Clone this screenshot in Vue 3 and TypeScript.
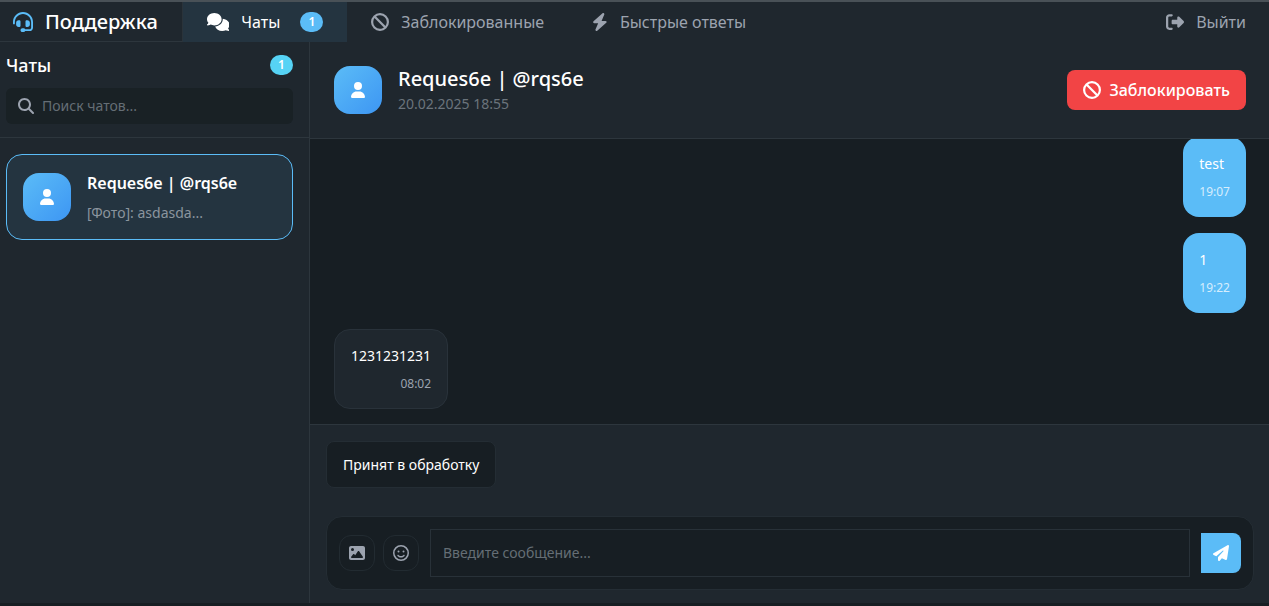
<script setup lang="ts">
import { ref } from 'vue'

interface Icon { box: string; path: string }
interface Message { id: number; text: string; time: string; own: boolean }

const icons: Record<string, Icon> = {
  headset: { box: '0 0 512 512', path: 'M256 48C141.1 48 48 141.1 48 256v40c0 13.3-10.7 24-24 24s-24-10.7-24-24V256C0 114.6 114.6 0 256 0S512 114.6 512 256V400.1c0 48.6-39.4 88-88.1 88L313.6 488c-8.3 14.3-23.8 24-41.6 24H240c-26.5 0-48-21.5-48-48s21.5-48 48-48h32c17.8 0 33.3 9.7 41.6 24l110.4 .1c22.1 0 40-17.9 40-40V256c0-114.9-93.1-208-208-208zM144 208h16c17.7 0 32 14.3 32 32V352c0 17.7-14.3 32-32 32H144c-35.3 0-64-28.7-64-64V272c0-35.3 28.7-64 64-64zm224 0c35.3 0 64 28.7 64 64v48c0 35.3-28.7 64-64 64H352c-17.7 0-32-14.3-32-32V240c0-17.7 14.3-32 32-32h16z' },
  comments: { box: '0 0 640 512', path: 'M208 352c114.9 0 208-78.8 208-176S322.9 0 208 0S0 78.8 0 176c0 38.6 14.7 74.3 39.6 103.4c-3.5 9.4-8.7 17.7-14.2 24.7c-4.8 6.2-9.7 11-13.3 14.3c-1.8 1.6-3.3 2.9-4.3 3.7c-.5 .4-.9 .7-1.1 .8l-.2 .2C1 327.2-1.4 334.4 .8 340.9S9.1 352 16 352c21.8 0 43.8-5.6 62.1-12.5c9.2-3.5 17.8-7.4 25.2-11.4C134.1 343.3 169.8 352 208 352zM448 176c0 112.3-99.1 196.9-216.5 207C255.8 457.4 336.4 512 432 512c38.2 0 73.9-8.7 104.7-23.9c7.5 4 16 7.9 25.2 11.4c18.3 6.9 40.3 12.5 62.1 12.5c6.9 0 13.1-4.5 15.2-11.1c2.1-6.6-.2-13.8-5.8-17.9l-.2-.2c-.2-.2-.6-.4-1.1-.8c-1-.8-2.5-2-4.3-3.7c-3.6-3.3-8.5-8.1-13.3-14.3c-5.5-7-10.7-15.4-14.2-24.7c24.9-29 39.6-64.7 39.6-103.4c0-92.8-84.9-168.9-192.6-175.5c.4 5.1 .6 10.3 .6 15.5z' },
  ban: { box: '0 0 512 512', path: 'M367.2 412.5L99.5 144.8C77.1 176.1 64 214.5 64 256c0 106 86 192 192 192c41.5 0 79.9-13.1 111.2-35.5zm45.3-45.3C434.9 335.9 448 297.5 448 256c0-106-86-192-192-192c-41.5 0-79.9 13.1-111.2 35.5L412.5 367.2zM0 256a256 256 0 1 1 512 0A256 256 0 1 1 0 256z' },
  bolt: { box: '0 0 448 512', path: 'M349.4 44.6c5.9-13.7 1.5-29.7-10.6-38.5s-28.6-8-39.9 1.8l-256 224c-10 8.8-13.6 22.9-8.9 35.3S50.7 288 64 288H175.5L98.6 467.4c-5.9 13.7-1.5 29.7 10.6 38.5s28.6 8 39.9-1.8l256-224c10-8.8 13.6-22.9 8.9-35.3s-16.6-20.7-30-20.7H272.5L349.4 44.6z' },
  exit: { box: '0 0 512 512', path: 'M377.9 105.9L500.7 228.7c7.2 7.2 11.3 17.1 11.3 27.3s-4.1 20.1-11.3 27.3L377.9 406.1c-6.4 6.4-15 9.9-24 9.9c-18.7 0-33.9-15.2-33.9-33.9l0-62.1-128 0c-17.7 0-32-14.3-32-32l0-64c0-17.7 14.3-32 32-32l128 0 0-62.1c0-18.7 15.2-33.9 33.9-33.9c9 0 17.6 3.6 24 9.9zM160 96L96 96c-17.7 0-32 14.3-32 32l0 256c0 17.7 14.3 32 32 32l64 0c17.7 0 32 14.3 32 32s-14.3 32-32 32l-64 0c-53 0-96-43-96-96L0 128C0 75 43 32 96 32l64 0c17.7 0 32 14.3 32 32s-14.3 32-32 32z' },
  search: { box: '0 0 512 512', path: 'M416 208c0 45.9-14.9 88.3-40 122.7L502.6 457.4c12.5 12.5 12.5 32.8 0 45.3s-32.8 12.5-45.3 0L330.7 376c-34.4 25.2-76.8 40-122.7 40C93.1 416 0 322.9 0 208S93.1 0 208 0S416 93.1 416 208zM208 352a144 144 0 1 0 0-288 144 144 0 1 0 0 288z' },
  user: { box: '0 0 448 512', path: 'M224 256A128 128 0 1 0 224 0a128 128 0 1 0 0 256zm-45.7 48C79.8 304 0 383.8 0 482.3C0 498.7 13.3 512 29.7 512H418.3c16.4 0 29.7-13.3 29.7-29.7C448 383.8 368.2 304 269.7 304H178.3z' },
  image: { box: '0 0 512 512', path: 'M0 96C0 60.7 28.7 32 64 32H448c35.3 0 64 28.7 64 64V416c0 35.3-28.7 64-64 64H64c-35.3 0-64-28.7-64-64V96zM323.8 202.5c-4.5-6.6-11.9-10.5-19.8-10.5s-15.4 3.9-19.8 10.5l-87 127.6L170.7 297c-4.6-5.7-11.5-9-18.7-9s-14.2 3.3-18.7 9l-64 80c-5.8 7.2-6.9 17.1-2.9 25.4s12.4 13.6 21.6 13.6h96 32H424c8.9 0 17.1-4.9 21.2-12.8s3.6-17.4-1.4-24.7l-120-176zM112 192a48 48 0 1 0 0-96 48 48 0 1 0 0 96z' },
  smile: { box: '0 0 512 512', path: 'M464 256A208 208 0 1 0 48 256a208 208 0 1 0 416 0zM0 256a256 256 0 1 1 512 0A256 256 0 1 1 0 256zm177.6 62.1C192.8 334.5 218.8 352 256 352s63.2-17.5 78.4-33.9c9-9.7 24.2-10.4 33.9-1.4s10.4 24.2 1.4 33.9c-22 23.8-60 49.4-113.6 49.4s-91.7-25.5-113.6-49.4c-9-9.7-8.4-24.9 1.4-33.9s24.9-8.4 33.9 1.4zM144.4 208a32 32 0 1 1 64 0 32 32 0 1 1 -64 0zm192-32a32 32 0 1 1 0 64 32 32 0 1 1 0-64z' },
  plane: { box: '0 0 512 512', path: 'M498.1 5.6c10.1 7 15.4 19.1 13.5 31.2l-64 416c-1.5 9.7-7.4 18.2-16 23s-18.9 5.4-28 1.6L284 427.7l-68.5 74.1c-8.9 9.7-22.9 12.9-35.2 8.1S160 493.2 160 480V396.4c0-4 1.5-7.8 4.2-10.7L331.8 202.8c5.8-6.3 5.6-16-.4-22s-15.7-6.4-22-.7L106 360.8 17.7 316.6C7.1 311.3 .3 300.7 0 288.9s5.9-22.8 16.1-28.7l448-256c10.7-6.1 23.9-5.5 34 1.4z' },
}

const messages = ref<Message[]>([
  { id: 1, text: 'test', time: '19:07', own: true },
  { id: 2, text: '1', time: '19:22', own: true },
  { id: 3, text: '1231231231', time: '08:02', own: false },
])
const search = ref('')
const draft = ref('')

function send() {
  const text = draft.value.trim()
  if (!text) return
  const time = new Date().toTimeString().slice(0, 5)
  messages.value.push({ id: messages.value.length + 1, text, time, own: true })
  draft.value = ''
}
</script>

<template>
  <div class="app">
    <nav class="nav">
      <div class="brand">
        <svg class="icon icon-brand" :viewBox="icons.headset.box" aria-hidden="true"><path :d="icons.headset.path" /></svg>
        <span>Поддержка</span>
      </div>
      <a class="tab active" href="#chats">
        <svg class="icon" :viewBox="icons.comments.box" aria-hidden="true"><path :d="icons.comments.path" /></svg>
        <span>Чаты</span>
        <span class="badge nav-badge">1</span>
      </a>
      <a class="tab" href="#blocked">
        <svg class="icon" :viewBox="icons.ban.box" aria-hidden="true"><path :d="icons.ban.path" /></svg>
        <span>Заблокированные</span>
      </a>
      <a class="tab" href="#replies">
        <svg class="icon" :viewBox="icons.bolt.box" aria-hidden="true"><path :d="icons.bolt.path" /></svg>
        <span>Быстрые ответы</span>
      </a>
      <a class="tab logout" href="#logout">
        <svg class="icon" :viewBox="icons.exit.box" aria-hidden="true"><path :d="icons.exit.path" /></svg>
        <span>Выйти</span>
      </a>
    </nav>

    <div class="body">
      <aside class="sidebar">
        <div class="side-head">
          <div class="side-title">
            <h2>Чаты</h2>
            <span class="badge count">1</span>
          </div>
          <label class="search">
            <svg class="icon icon-search" :viewBox="icons.search.box" aria-hidden="true"><path :d="icons.search.path" /></svg>
            <input v-model="search" type="text" placeholder="Поиск чатов..." aria-label="Поиск чатов" />
          </label>
        </div>
        <div class="chat-list">
          <button class="chat" type="button">
            <span class="avatar">
              <svg class="icon icon-user" :viewBox="icons.user.box" aria-hidden="true"><path :d="icons.user.path" /></svg>
            </span>
            <span class="chat-text">
              <span class="chat-name">Reques6e | @rqs6e</span>
              <span class="chat-preview">[Фото]: asdasda...</span>
            </span>
          </button>
        </div>
      </aside>

      <main class="main">
        <header class="chat-head">
          <span class="avatar">
            <svg class="icon icon-user" :viewBox="icons.user.box" aria-hidden="true"><path :d="icons.user.path" /></svg>
          </span>
          <div class="who">
            <h1>Reques6e | @rqs6e</h1>
            <time>20.02.2025 18:55</time>
          </div>
          <button class="block" type="button">
            <svg class="icon" :viewBox="icons.ban.box" aria-hidden="true"><path :d="icons.ban.path" /></svg>
            <span>Заблокировать</span>
          </button>
        </header>

        <section class="messages">
          <div v-for="m in messages" :key="m.id" class="bubble" :class="{ own: m.own }">
            <span class="text">{{ m.text }}</span>
            <time>{{ m.time }}</time>
          </div>
        </section>

        <footer class="foot">
          <button class="quick" type="button" @click="draft = 'Принят в обработку'">Принят в обработку</button>
          <form class="composer" @submit.prevent="send">
            <div class="tools">
              <button class="tool" type="button" aria-label="Прикрепить фото">
                <svg class="icon icon-tool" :viewBox="icons.image.box" aria-hidden="true"><path :d="icons.image.path" /></svg>
              </button>
              <button class="tool" type="button" aria-label="Эмодзи">
                <svg class="icon icon-tool" :viewBox="icons.smile.box" aria-hidden="true"><path :d="icons.smile.path" /></svg>
              </button>
            </div>
            <textarea v-model="draft" rows="1" placeholder="Введите сообщение..." aria-label="Сообщение"></textarea>
            <button class="send" type="submit" aria-label="Отправить">
              <svg class="icon icon-send" :viewBox="icons.plane.box" aria-hidden="true"><path :d="icons.plane.path" /></svg>
            </button>
          </form>
        </footer>
      </main>
    </div>
  </div>
</template>

<style>
body {
  background: #171e23;
}
</style>

<style scoped>
* {
  box-sizing: border-box;
}

.app {
  display: flex;
  flex-direction: column;
  height: 100vh;
  padding-bottom: 3px;
  border-top: 2px solid #495157;
  background: #171e23;
  color: #fff;
  font: 16px/24px "Noto Sans", "Open Sans", sans-serif;
}

button,
input,
textarea {
  margin: 0;
  font: inherit;
  color: inherit;
}

button {
  cursor: pointer;
}

h1,
h2 {
  margin: 0;
  font-weight: 500;
}

.icon {
  display: block;
  flex: none;
  width: auto;
  height: 18px;
  fill: currentColor;
}

.icon-brand {
  height: 20px;
  color: #5bbcf7;
}

.icon-search,
.icon-tool,
.icon-send {
  height: 16px;
}

.icon-user {
  height: 16px;
}

.nav {
  display: flex;
  flex: none;
  height: 40px;
  background: #1f272e;
}

.brand {
  display: flex;
  align-items: center;
  gap: 12px;
  padding: 0 24px 0 13px;
  border-right: 1px solid #2a333a;
  border-bottom: 1px solid #2d363d;
  font-size: 20px;
  font-weight: 500;
}

.tab {
  display: flex;
  align-items: center;
  gap: 12px;
  padding: 0 24px;
  color: #9ca3af;
  text-decoration: none;
}

.tab.active {
  background: #243440;
  color: #fff;
}

.logout {
  margin-left: auto;
  padding-right: 23px;
}

.badge {
  min-width: 23px;
  padding: 0 8px;
  border-radius: 10px;
  background: #5bbcf7;
  font-size: 12px;
  font-weight: 600;
  line-height: 20px;
  text-align: center;
}

.nav-badge {
  margin-left: 8px;
}

.count {
  background: #56d3f5;
}

.body {
  display: flex;
  flex: 1;
  min-height: 0;
}

.sidebar {
  flex: none;
  width: 310px;
  border-right: 1px solid #2d363d;
  background: #1f272e;
}

.side-head {
  display: flex;
  flex-direction: column;
  gap: 11px;
  padding: 11px 16px 13px 6px;
  border-bottom: 1px solid #2d363d;
}

.side-title {
  display: flex;
  align-items: center;
  justify-content: space-between;
}

.side-title h2 {
  font-size: 18px;
  line-height: 24px;
}

.search {
  display: flex;
  align-items: center;
  gap: 8px;
  height: 36px;
  padding: 0 12px;
  border-radius: 6px;
  background: #192125;
  color: #9ca3af;
}

.search input {
  flex: 1;
  min-width: 0;
  padding: 0;
  border: 0;
  outline: 0;
  background: none;
  font-size: 14px;
}

::placeholder {
  color: #656e75;
  opacity: 1;
}

.chat-list {
  padding: 16px 16px 16px 6px;
}

.chat {
  display: flex;
  align-items: center;
  gap: 16px;
  width: 100%;
  padding: 16px;
  border: 1px solid #5bbcf7;
  border-radius: 16px;
  background: #243440;
  text-align: left;
}

.avatar {
  display: flex;
  flex: none;
  align-items: center;
  justify-content: center;
  width: 48px;
  height: 48px;
  border-radius: 16px;
  background: linear-gradient(135deg, #5bbcf7, #3d96f3);
}

.chat-text {
  display: flex;
  flex-direction: column;
  gap: 7px;
}

.chat-name {
  font-weight: 600;
}

.chat-preview {
  color: #8b959e;
  font-size: 14px;
  line-height: 21px;
}

.main {
  display: flex;
  flex: 1;
  flex-direction: column;
  min-width: 0;
}

.chat-head {
  display: flex;
  flex: none;
  align-items: center;
  gap: 16px;
  padding: 24px 23px 24px 24px;
  border-bottom: 1px solid #2d363d;
  background: #1f272e;
}

.who {
  display: flex;
  flex-direction: column;
  gap: 2px;
}

.who h1 {
  font-size: 20px;
  line-height: 26px;
}

.who time {
  color: #6b747c;
  font-size: 14px;
  line-height: 20px;
}

.block {
  display: flex;
  align-items: center;
  gap: 8px;
  height: 40px;
  margin-left: auto;
  padding: 0 16px;
  border: 0;
  border-radius: 8px;
  background: #f24445;
  font-weight: 500;
}

.messages {
  display: flex;
  flex: 1;
  flex-direction: column;
  align-items: flex-start;
  justify-content: flex-end;
  gap: 16px;
  min-height: 0;
  padding: 0 23px 15px 24px;
  overflow: hidden;
}

.bubble {
  display: flex;
  flex: none;
  flex-direction: column;
  gap: 8px;
  padding: 15px 16px;
  border: 1px solid #29323a;
  border-radius: 16px;
  background: #1f272e;
  font-size: 14px;
  line-height: 22px;
}

.bubble time {
  align-self: flex-end;
  color: #9ca3af;
  font-size: 12px;
  line-height: 18px;
}

.bubble.own {
  align-self: flex-end;
  padding: 16px;
  border: 0;
  background: #5bbcf7;
}

.bubble.own time {
  color: #d6edfd;
}

.foot {
  display: flex;
  flex: none;
  flex-direction: column;
  align-items: flex-start;
  gap: 28px;
  padding: 16px 15px 13px 16px;
  border-top: 1px solid #2d363d;
  background: #1f272e;
}

.quick {
  height: 47px;
  padding: 0 16px;
  border: 1px solid #242d34;
  border-radius: 8px;
  background: #171e23;
  font-size: 14px;
}

.composer {
  display: flex;
  align-items: center;
  align-self: stretch;
  gap: 11px;
  padding: 12px;
  border: 1px solid #242d34;
  border-radius: 16px;
  background: #171e23;
}

.tools {
  display: flex;
  gap: 8px;
}

.tool {
  display: flex;
  align-items: center;
  justify-content: center;
  width: 36px;
  height: 36px;
  padding: 0;
  border: 1px solid #222b31;
  border-radius: 12px;
  background: none;
  color: #9ca3af;
}

textarea {
  flex: 1;
  height: 48px;
  min-width: 0;
  padding: 11px 12px;
  border: 1px solid #283138;
  border-radius: 0;
  outline: 0;
  background: none;
  font-size: 14px;
  line-height: 24px;
  resize: none;
}

.send {
  display: flex;
  align-items: center;
  justify-content: center;
  width: 40px;
  height: 40px;
  padding: 0;
  border: 0;
  border-radius: 0 8px 8px 0;
  background: #5bbcf7;
}
</style>
